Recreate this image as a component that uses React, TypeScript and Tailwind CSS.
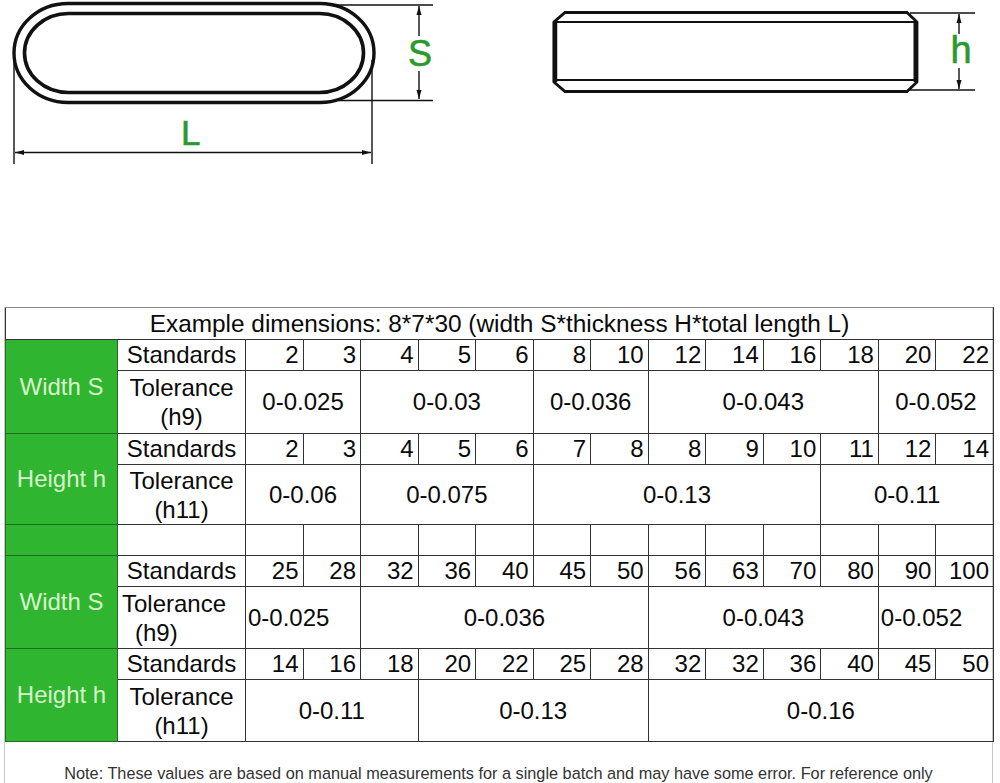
import React from "react";

type Tol = { text: string; span: number; align?: "left" | "center" };

interface Block {
  label: string;
  std: number[];
  tolLabel: string;
  tol: Tol[];
  tolH: string;
  tolIndent?: boolean;
}

const blocksTop: Block[] = [
  {
    label: "Width S",
    std: [2, 3, 4, 5, 6, 8, 10, 12, 14, 16, 18, 20, 22],
    tolLabel: "(h9)",
    tol: [
      { text: "0-0.025", span: 2 },
      { text: "0-0.03", span: 3 },
      { text: "0-0.036", span: 2 },
      { text: "0-0.043", span: 4 },
      { text: "0-0.052", span: 2 },
    ],
    tolH: "h-[63px]",
  },
  {
    label: "Height h",
    std: [2, 3, 4, 5, 6, 7, 8, 8, 9, 10, 11, 12, 14],
    tolLabel: "(h11)",
    tol: [
      { text: "0-0.06", span: 2 },
      { text: "0-0.075", span: 3 },
      { text: "0-0.13", span: 5 },
      { text: "0-0.11", span: 3 },
    ],
    tolH: "h-[60px]",
  },
];

const blocksBottom: Block[] = [
  {
    label: "Width S",
    std: [25, 28, 32, 36, 40, 45, 50, 56, 63, 70, 80, 90, 100],
    tolLabel: "(h9)",
    tol: [
      { text: "0-0.025", span: 2, align: "left" },
      { text: "0-0.036", span: 5 },
      { text: "0-0.043", span: 4 },
      { text: "0-0.052", span: 2, align: "left" },
    ],
    tolH: "h-[62px]",
    tolIndent: true,
  },
  {
    label: "Height h",
    std: [14, 16, 18, 20, 22, 25, 28, 32, 32, 36, 40, 45, 50],
    tolLabel: "(h11)",
    tol: [
      { text: "0-0.11", span: 3 },
      { text: "0-0.13", span: 4 },
      { text: "0-0.16", span: 6 },
    ],
    tolH: "h-[62px]",
  },
];

const cell = "border border-[#333] p-0";
const green = "border border-[#1f6e1f] bg-[#30b530] text-[#d6f3cb] text-center p-0";

function BlockRows({ b }: { b: Block }) {
  return (
    <>
      <tr className="h-[31px]">
        <td rowSpan={2} className={green}>
          {b.label}
        </td>
        <td className={`${cell} text-center`}>Standards</td>
        {b.std.map((n, i) => (
          <td key={i} className={`${cell} text-right pr-[4px]`}>
            {n}
          </td>
        ))}
      </tr>
      <tr className={b.tolH}>
        <td className={`${cell} leading-[29px] ${b.tolIndent ? "text-left pl-[4px]" : "text-center"}`}>
          <div>Tolerance</div>
          <div className={b.tolIndent ? "pl-[13px]" : ""}>{b.tolLabel}</div>
        </td>
        {b.tol.map((t, i) => (
          <td
            key={i}
            colSpan={t.span}
            className={`${cell} ${t.align === "left" ? "text-left pl-[2px]" : "text-center"}`}
          >
            {t.text}
          </td>
        ))}
      </tr>
    </>
  );
}

function Arrow({ x, y, dir }: { x: number; y: number; dir: "up" | "down" | "left" | "right" }) {
  const pts =
    dir === "up"
      ? `${x},${y} ${x - 2.5},${y + 9} ${x + 2.5},${y + 9}`
      : dir === "down"
        ? `${x},${y} ${x - 2.5},${y - 9} ${x + 2.5},${y - 9}`
        : dir === "left"
          ? `${x},${y} ${x + 9},${y - 2.5} ${x + 9},${y + 2.5}`
          : `${x},${y} ${x - 9},${y - 2.5} ${x - 9},${y + 2.5}`;
  return <polygon points={pts} fill="#111" />;
}

function KeyTop() {
  return (
    <svg width="450" height="170" viewBox="0 0 450 170" className="shrink-0">
      <rect x="14" y="3.5" width="360" height="99" rx="54" ry="49.5" fill="none" stroke="#111" strokeWidth="3.4" />
      <rect x="24.5" y="13.5" width="339" height="79" rx="44" ry="39.5" fill="none" stroke="#111" strokeWidth="3.6" />
      <line x1="335" y1="5" x2="433" y2="5" stroke="#111" strokeWidth="1.4" />
      <line x1="338" y1="100.5" x2="433" y2="100.5" stroke="#111" strokeWidth="1.4" />
      <line x1="419" y1="6" x2="419" y2="36" stroke="#111" strokeWidth="1.4" />
      <line x1="419" y1="71" x2="419" y2="99" stroke="#111" strokeWidth="1.4" />
      <Arrow x={419} y={6} dir="up" />
      <Arrow x={419} y={99} dir="down" />
      <text x="420" y="66" textAnchor="middle" fontSize="36" fill="#2a9a2a" stroke="#2a9a2a" strokeWidth="0.6" fontFamily="'Liberation Sans', Arial, sans-serif">
        S
      </text>
      <line x1="14" y1="60" x2="14" y2="164" stroke="#111" strokeWidth="1.4" />
      <line x1="372" y1="60" x2="372" y2="164" stroke="#111" strokeWidth="1.4" />
      <line x1="15" y1="152.5" x2="371" y2="152.5" stroke="#111" strokeWidth="1.4" />
      <Arrow x={15} y={152.5} dir="left" />
      <Arrow x={371} y={152.5} dir="right" />
      <text x="181" y="145" fontSize="35" fill="#2a9a2a" stroke="#2a9a2a" strokeWidth="0.6" fontFamily="'Liberation Sans', Arial, sans-serif">
        L
      </text>
    </svg>
  );
}

function KeySide() {
  return (
    <svg width="460" height="110" viewBox="540 0 460 110" className="shrink-0 ml-[90px]">
      <polygon
        points="565,12.5 907,12.5 917,22 917,82 907,91.5 565,91.5 554,82 554,22"
        fill="none"
        stroke="#111"
        strokeWidth="2.8"
      />
      <line x1="555" y1="22" x2="555" y2="82" stroke="#111" strokeWidth="4.5" />
      <line x1="915.5" y1="22" x2="915.5" y2="82" stroke="#111" strokeWidth="4" />
      <line x1="556" y1="22" x2="916" y2="22" stroke="#111" strokeWidth="2" />
      <line x1="556" y1="80" x2="916" y2="80" stroke="#111" strokeWidth="2" />
      <line x1="910" y1="13" x2="975" y2="13" stroke="#111" strokeWidth="1.4" />
      <line x1="908" y1="90" x2="975" y2="90" stroke="#111" strokeWidth="1.4" />
      <line x1="959" y1="14" x2="959" y2="34" stroke="#111" strokeWidth="1.4" />
      <line x1="959" y1="68" x2="959" y2="89" stroke="#111" strokeWidth="1.4" />
      <Arrow x={959} y={14} dir="up" />
      <Arrow x={959} y={89} dir="down" />
      <text x="961" y="63" textAnchor="middle" fontSize="38" fill="#2a9a2a" stroke="#2a9a2a" strokeWidth="0.6" fontFamily="'Liberation Sans', Arial, sans-serif">
        h
      </text>
    </svg>
  );
}

export default function App() {
  return (
    <div className="w-[1000px] h-[783px] bg-white overflow-hidden font-['Liberation_Sans',Arial,sans-serif] text-[#0a0a0a]">
      <div className="flex h-[307px]">
        <KeyTop />
        <KeySide />
      </div>

      <div className="ml-[4px] w-[989px] border-x border-[#c8c8c8]">
        <table className="w-[989px] table-fixed border-collapse text-[24px] leading-[28px]">
          <colgroup>
            <col className="w-[112px]" />
            <col className="w-[128px]" />
            {Array.from({ length: 13 }).map((_, i) => (
              <col key={i} />
            ))}
          </colgroup>
          <tbody>
            <tr className="h-[32px]">
              <td colSpan={15} className="border border-[#333] border-t-[#8a8a8a] text-center p-0 text-[24.4px]">
                Example dimensions: 8*7*30 (width S*thickness H*total length L)
              </td>
            </tr>
            {blocksTop.map((b, i) => (
              <BlockRows key={i} b={b} />
            ))}
            <tr className="h-[31px]">
              <td className={green}></td>
              <td className={cell}></td>
              {Array.from({ length: 13 }).map((_, i) => (
                <td key={i} className={cell}></td>
              ))}
            </tr>
            {blocksBottom.map((b, i) => (
              <BlockRows key={i} b={b} />
            ))}
          </tbody>
        </table>
        <div className="h-[42px] pt-[22px] text-center text-[16.3px] leading-[18px] text-[#333]">
          Note: These values are based on manual measurements for a single batch and may have some error. For reference only
        </div>
      </div>
    </div>
  );
}
